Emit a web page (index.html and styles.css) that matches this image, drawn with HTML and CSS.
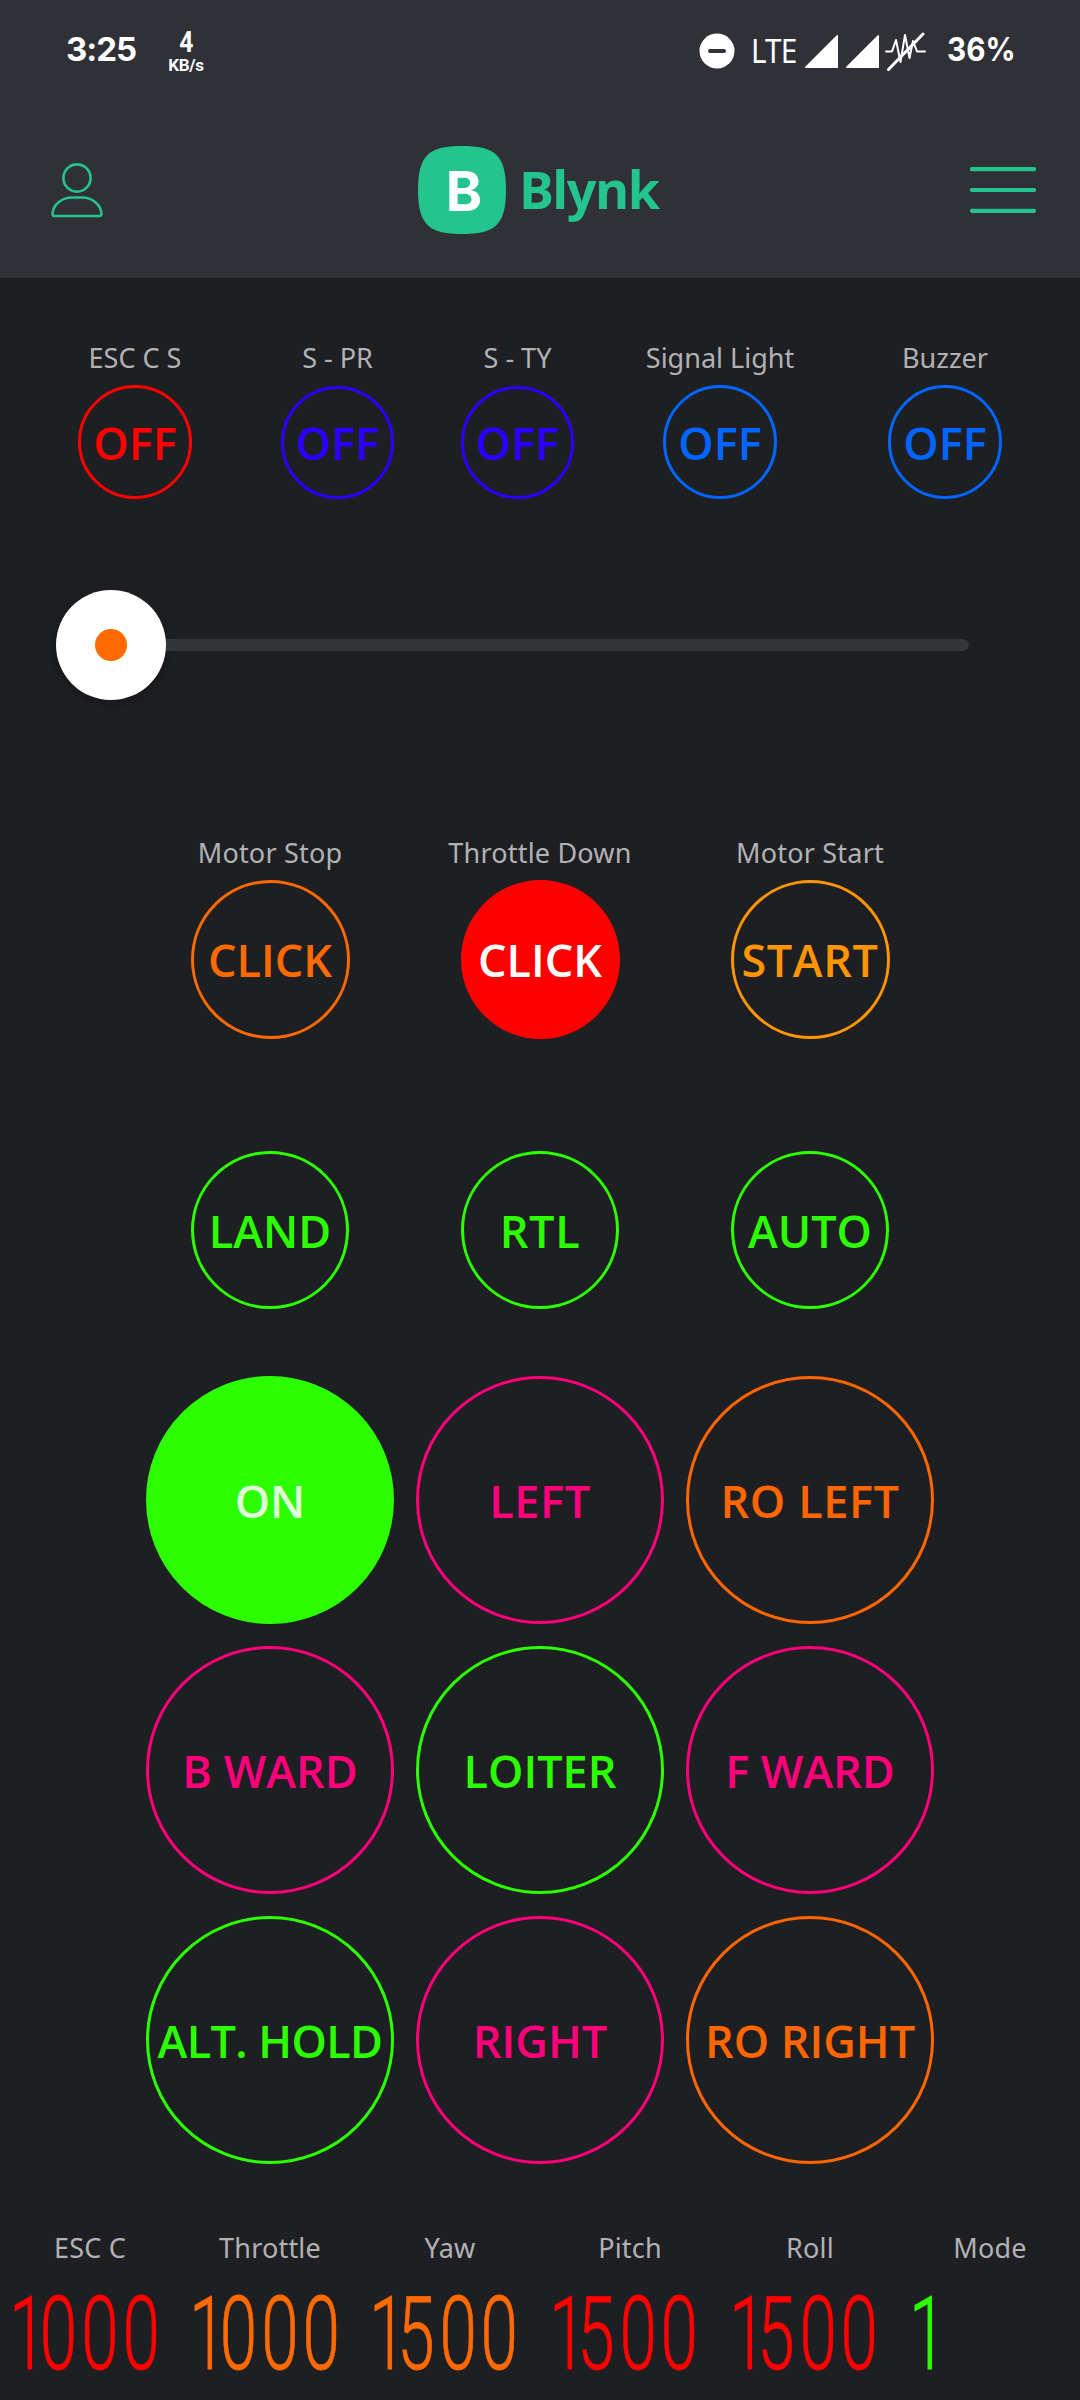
FILE: index.html
```html
<!DOCTYPE html>
<html lang="en">
<head>
<meta charset="utf-8">
<title>Blynk</title>
<link rel="stylesheet" href="styles.css">
</head>
<body>
<header class="top">
  <div class="status">
    <div class="status-left">
      <span class="clock">3:25</span>
      <span class="speed"><b class="speed-num">4</b><b class="speed-unit">KB/s</b></span>
    </div>
    <div class="status-right">
      <svg class="dnd" viewBox="0 0 36 36"><circle cx="18" cy="18" r="17.5" fill="#fff"/><path d="M11 18h14" stroke="#303136" stroke-width="4" stroke-linecap="round"/></svg>
      <span class="lte">LTE</span>
      <svg class="signal" viewBox="0 0 33 33"><path d="M33 1v32H1q-2 0-.5-1.500L31 1q2-2 2 0z" fill="#fff"/></svg>
      <svg class="signal second" viewBox="0 0 33 33"><path d="M33 1v32H1q-2 0-.5-1.500L31 1q2-2 2 0z" fill="#fff"/></svg>
      <svg class="vibrate" viewBox="0 0 42 40" fill="none" stroke="#fff" stroke-linecap="round" stroke-linejoin="round"><path stroke-width="2" d="M1 20.500h6l4-11.500 4.500 22 4.500-27 4.500 23 3.500-17 4 10.500h8"/><path stroke-width="3" d="M3.500 38.500 38 3"/></svg>
      <span class="battery">36%</span>
    </div>
  </div>
  <nav class="bar">
    <svg class="person" viewBox="0 0 54 56" fill="none" stroke="#24c48e" stroke-width="2.600"><circle cx="27" cy="16" r="13.600"/><path d="M4.500 54a2.200 2.200 0 0 1-2-2.600C3.500 42 12 35.500 22 35.500h10c10 0 18.500 6.500 19.500 15.900a2.200 2.200 0 0 1-2 2.600z"/></svg>
    <div class="brand">
      <span class="mark">
        <svg class="mark-shape" viewBox="0 0 88 88"><path d="M44 0C76 0 88 8 88 44S76 88 44 88 0 80 0 44 12 0 44 0z" fill="#24c48e"/></svg>
        <b class="mark-letter">B</b>
      </span>
      <span class="name">Blynk</span>
    </div>
    <svg class="menu" viewBox="0 0 66 46" stroke="#24c48e" stroke-width="4.200" stroke-linecap="round"><path d="M2 2.200h62M2 23h62M2 43.800h62"/></svg>
  </nav>
</header>

<main>
  <section class="switches">
    <div class="widget"><span class="label">ESC C S</span><button class="round small red">OFF</button></div>
    <div class="widget"><span class="label">S - PR</span><button class="round small smaller blue">OFF</button></div>
    <div class="widget"><span class="label">S - TY</span><button class="round small smaller blue">OFF</button></div>
    <div class="widget"><span class="label">Signal Light</span><button class="round small azure">OFF</button></div>
    <div class="widget"><span class="label">Buzzer</span><button class="round small azure">OFF</button></div>
  </section>

  <div class="slider"><span class="thumb"></span><span class="track"></span></div>

  <section class="motors">
    <div class="widget"><span class="label">Motor Stop</span><button class="round medium orange">CLICK</button></div>
    <div class="widget"><span class="label">Throttle Down</span><button class="round medium red filled">CLICK</button></div>
    <div class="widget"><span class="label">Motor Start</span><button class="round medium amber loose">START</button></div>
  </section>

  <section class="modes">
    <button class="round mode green">LAND</button>
    <button class="round mode green loose">RTL</button>
    <button class="round mode green">AUTO</button>
  </section>

  <section class="pad">
    <button class="round large green filled">ON</button>
    <button class="round large pink loose">LEFT</button>
    <button class="round large deep loose">RO LEFT</button>
    <button class="round large pink">B WARD</button>
    <button class="round large green">LOITER</button>
    <button class="round large pink">F WARD</button>
    <button class="round large green tight">ALT. HOLD</button>
    <button class="round large pink">RIGHT</button>
    <button class="round large deep">RO RIGHT</button>
  </section>

  <section class="readouts">
    <div class="readout red"><span class="label">ESC C</span><svg class="value" viewBox="0 0 166 90"><text transform="scale(.66 1)" y="81" x="3 49.500 112.500 175">1000</text></svg></div>
    <div class="readout orange"><span class="label">Throttle</span><svg class="value" viewBox="0 0 166 90"><text transform="scale(.66 1)" y="81" x="3 49.500 112.500 175">1000</text></svg></div>
    <div class="readout orange"><span class="label">Yaw</span><svg class="value" viewBox="0 0 166 90"><text transform="scale(.66 1)" y="81" x="3 46 110 172">1500</text></svg></div>
    <div class="readout red"><span class="label">Pitch</span><svg class="value" viewBox="0 0 166 90"><text transform="scale(.66 1)" y="81" x="3 46 110 172">1500</text></svg></div>
    <div class="readout red"><span class="label">Roll</span><svg class="value" viewBox="0 0 166 90"><text transform="scale(.66 1)" y="81" x="3 46 110 172">1500</text></svg></div>
    <div class="readout green"><span class="label">Mode</span><svg class="value" viewBox="0 0 166 90"><text transform="scale(.66 1)" y="81" x="3">1</text></svg></div>
  </section>
</main>
</body>
</html>
```
FILE: styles.css
```css
* { box-sizing: border-box; }

body {
  margin: 0;
  width: 1080px;
  height: 2400px;
  overflow: hidden;
  background: #1e1f23;
  font-family: "Noto Sans", "Open Sans", sans-serif;
}

svg { display: block; flex: none; }

/* Header */
.top { height: 278px; background: #303136; color: #fff; }

.status {
  display: flex;
  justify-content: space-between;
  height: 102px;
  padding: 0 67px 0 66px;
}
.status-left, .status-right { display: flex; align-items: center; white-space: nowrap; }
.clock, .battery { font: 700 33px/40px Inter, sans-serif; margin-top: -4px; }
.clock { width: 102px; letter-spacing: -1px; }
.speed { display: flex; flex-direction: column; align-items: center; width: 36px; font-family: Roboto, sans-serif; }
.speed-num { font-size: 29px; line-height: 29px; transform: scaleX(.85); }
.speed-unit { font-size: 17px; line-height: 17px; letter-spacing: -.3px; }
.dnd { width: 36px; height: 36px; margin-right: 16px; }
.lte { font: 400 33px/40px "Noto Sans", sans-serif; width: 60px; margin-right: -6px; transform: scaleX(.9); transform-origin: left; letter-spacing: -1px; }
.signal { width: 33px; height: 33px; margin-right: 8px; }
.signal.second { margin-right: 6px; }
.vibrate { width: 42px; height: 40px; margin-right: 20px; }
.battery { width: 66px; transform: scaleX(.9); transform-origin: left; }

.bar {
  display: flex;
  justify-content: space-between;
  align-items: center;
  height: 176px;
  padding: 0 44px 0 50px;
}
.person { width: 54px; height: 56px; }
.menu { width: 66px; height: 46px; }
.brand { display: flex; align-items: center; gap: 13px; padding-left: 3px; }
.mark { display: grid; place-items: center; width: 88px; height: 88px; }
.mark-shape, .mark-letter { grid-area: 1 / 1; }
.mark-shape { width: 88px; height: 88px; }
.mark-letter { padding: 2px 0 0 3px; font: 700 55px/60px Inter, sans-serif; }
.name { color: #24c48e; font-size: 52px; line-height: 60px; font-weight: 700; letter-spacing: -1.300px; padding-bottom: 2px; }

/* Widgets */
.label { color: #b2b2b4; font-size: 27px; line-height: 36px; white-space: nowrap; }

.widget { display: flex; flex-direction: column; align-items: center; justify-content: space-between; }

.round {
  display: grid;
  place-items: center;
  padding: 0;
  border: 3px solid currentColor;
  border-radius: 50%;
  background: none;
  font: 600 45px/50px "Open Sans", "Noto Sans", sans-serif;
  white-space: nowrap;
}
.small { width: 114px; height: 114px; padding-top: 1px; }
.smaller { width: 113px; height: 113px; padding-top: 0; }
.medium { width: 159px; height: 159px; }
.mode { width: 158px; height: 158px; padding-top: 1px; }
.large { width: 248px; height: 248px; padding-top: 2px; }
.tight { letter-spacing: -.6px; }
.loose { letter-spacing: .6px; }

.red { color: #f00; }
.blue { color: #2b00ff; }
.azure { color: #06f; }
.orange { color: #ff6a00; }
.deep { color: #f60; }
.amber { color: #ff9500; }
.green { color: #2bff00; }
.pink { color: #ff007b; }
.filled.red { background: #f00; border-color: #f00; color: #fff; }
.filled.green { background: #2bff00; border-color: #2bff00; color: #dfffd9; }

.switches {
  display: grid;
  grid-template-columns: 270px 135px 225px 180px 270px;
  height: 159px;
  margin-top: 62px;
}

.slider { display: flex; align-items: center; height: 110px; margin: 91px 111px 0 56px; }
.thumb {
  flex: none;
  width: 110px;
  height: 110px;
  border-radius: 50%;
  background: radial-gradient(circle, #ff6a00 15.500px, #fff 16.500px);
  box-shadow: 0 3px 10px rgba(0, 0, 0, .3);
}
.track { flex: 1; height: 12px; border-radius: 0 6px 6px 0; background: #343538; }

.motors, .modes, .pad {
  display: grid;
  grid-template-columns: repeat(3, 270px);
  justify-content: center;
  justify-items: center;
}
.motors { height: 204px; margin-top: 135px; }
.modes { margin-top: 112px; }
.pad { margin-top: 67px; row-gap: 22px; }
.motors .label, .readouts .label { letter-spacing: .2px; }

.readouts { display: grid; grid-template-columns: repeat(6, 180px); margin-top: 66px; }
.readout { display: flex; flex-direction: column; align-items: center; }
.value {
  width: 166px;
  height: 90px;
  margin-top: 22px;
  overflow: visible;
  fill: currentColor;
  stroke: currentColor;
  stroke-width: .8px;
  font: 300 102px Roboto, sans-serif;
}
```
